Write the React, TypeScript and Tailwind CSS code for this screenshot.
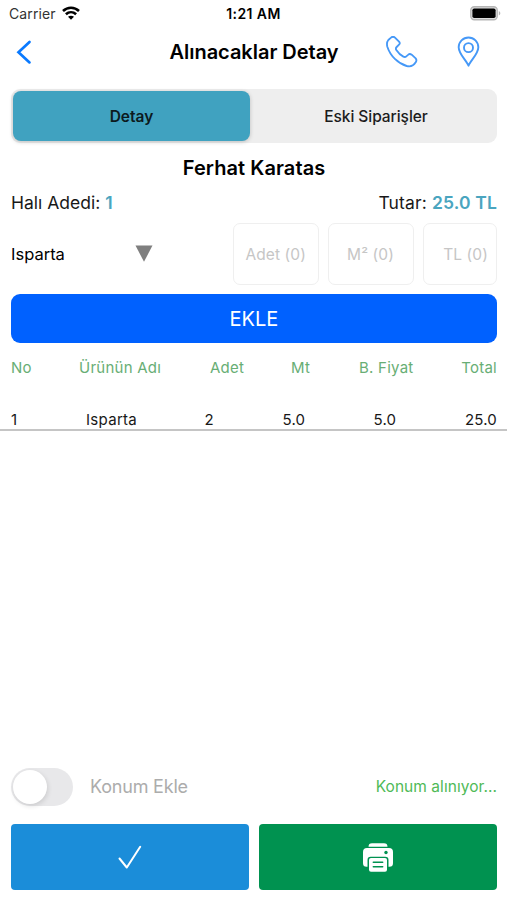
import { useState } from 'react';

interface OrderLine {
  no: number;
  name: string;
  quantity: number;
  meters: string;
  unitPrice: string;
  total: string;
}

const ORDER_LINES: OrderLine[] = [
  { no: 1, name: 'Isparta', quantity: 2, meters: '5.0', unitPrice: '5.0', total: '25.0' },
];

function WifiIcon() {
  return (
    <svg width="18" height="14" viewBox="0 0 18 14" fill="none" stroke="#000" strokeWidth="2.6" className="-mt-[2px]">
      <path d="M1 5C5.6.7 12.4.7 17 5" />
      <path d="M3.9 8.3c3-2.8 7.2-2.8 10.2 0" />
      <path d="M9 13.8 6 10.8c1.7-1.5 4.3-1.5 6 0z" fill="#000" stroke="none" />
    </svg>
  );
}

function BatteryIcon() {
  return (
    <svg width="31" height="15" viewBox="0 0 31 15">
      <rect x=".75" y=".75" width="26.5" height="13" rx="3.5" fill="#dedede" stroke="#b5b5b5" strokeWidth="1.3" />
      <rect x="2.4" y="2.4" width="23.2" height="9.7" rx="1.8" />
      <path d="M28.8 5c2 .8 2 3.7 0 4.5z" fill="#b5b5b5" />
    </svg>
  );
}

function PhoneIcon() {
  return (
    <svg width="32" height="32" viewBox="0 0 96 96" fill="none" stroke="#4598f7" strokeWidth="5.5" strokeLinejoin="round">
      <path d="M7 12 15 5C19 1 23 1 27 5L39 17C42 20 42 23 39 26L32 33C29 36 29 39 31 42 37 51 44 58 52 62 56 64 58 64 61 61L67 56C70 53 73 53 77 56L89 67C92 71 92 75 89 79 83 89 73 93 62 90 36 82 13 60 4 32 2 24 2 18 7 12Z" />
    </svg>
  );
}

function PinIcon() {
  return (
    <svg width="23" height="32" viewBox="0 0 69 96" fill="none" stroke="#4598f7" strokeWidth="5.7" strokeLinejoin="round">
      <path d="M34.5 89C29 74 5 54 5 33.500a29.500 29 0 0 1 59 0C64 54 40 74 34.500 89Z" />
      <circle cx="34.5" cy="35" r="13.500" />
    </svg>
  );
}

function StatusBar() {
  return (
    <div className="grid h-[27px] grid-cols-3 items-center pl-[9px] pr-[6px]">
      <div className="flex items-center gap-[6px] text-[14px] tracking-[0.1px] text-[#333]">
        Carrier
        <WifiIcon />
      </div>
      <span className="-ml-[3px] text-center text-[14px] font-semibold tracking-[0.4px]">1:21 AM</span>
      <div className="flex justify-end">
        <BatteryIcon />
      </div>
    </div>
  );
}

function NavBar() {
  return (
    <header className="grid h-[50px] grid-cols-[1fr_auto_1fr] items-center pl-[16px] pr-[27px]">
      <button type="button" aria-label="Geri">
        <svg width="16" height="26" viewBox="0 0 16 26" fill="none" stroke="#0a7aff" strokeWidth="2.7" strokeLinecap="round">
          <path d="M13.5 3 2.5 13.2 13.5 23.4" />
        </svg>
      </button>
      <h1 className="ml-[12px] text-[20px] font-semibold tracking-[-0.03px]">Alınacaklar Detay</h1>
      <div className="flex items-center justify-end gap-[39px]">
        <PhoneIcon />
        <PinIcon />
      </div>
    </header>
  );
}

function Tabs() {
  const [active, setActive] = useState(0);
  const tabs = ['Detay', 'Eski Siparişler'];

  return (
    <div className="ml-[11px] mr-[10px] mt-[12px] grid h-[54px] grid-cols-2 rounded-[9px] bg-[#eeeeee] py-[2px] pl-[2px]">
      {tabs.map((tab, i) => (
        <button
          key={tab}
          type="button"
          onClick={() => setActive(i)}
          className={
            i === active
              ? 'mr-[5px] rounded-[8px] bg-[#40a2c0] pt-[2px] text-[15.5px] font-semibold text-[#0c1a1e] shadow-[0_1px_4px_rgba(0,0,0,0.2)]'
              : 'rounded-[8px] pt-[2px] text-[15.5px] font-medium tracking-[-0.05px] text-[#1c1c1c]'
          }
        >
          {tab}
        </button>
      ))}
    </div>
  );
}

function NewLineForm() {
  const field =
    'h-[62px] rounded-[7px] border border-[#efefef] text-right text-[15.5px] tracking-[0.1px] placeholder:text-[#c6c6c6] focus:outline-none';

  return (
    <div className="mt-[8px] flex h-[62px] items-center">
      <button type="button" className="flex w-[142px] items-center justify-between text-[16.5px]">
        Isparta
        <svg width="18" height="17" viewBox="0 0 18 17" fill="#7f7f7f" className="-mt-[2px]">
          <path d="M.5.5h17L9 16.8z" />
        </svg>
      </button>
      <div className="ml-auto flex gap-[9px]">
        <input placeholder="Adet (0)" className={`${field} w-[86px] pr-[12px]`} />
        <input placeholder="M² (0)" className={`${field} w-[86px] pr-[19px]`} />
        <input placeholder="TL (0)" className={`${field} w-[74px] pr-[8px]`} />
      </div>
    </div>
  );
}

function OrderTable() {
  return (
    <section>
      <div className="flex h-[50px] pl-[11px] pr-[10px] text-[15px] leading-[50px] tracking-[0.25px] text-[#68ae75]">
        <span className="w-[68px]">No</span>
        <span className="w-[131px]">Ürünün Adı</span>
        <span className="w-[81px]">Adet</span>
        <span className="w-[68px]">Mt</span>
        <span>B. Fiyat</span>
        <span className="ml-auto">Total</span>
      </div>
      {ORDER_LINES.map((line) => (
        <div
          key={line.no}
          className="flex h-[38px] items-end border-b-2 border-[#c5c5c5] pl-[11px] pr-[10px] text-[15px] leading-[18px] text-[#181818]"
        >
          <span className="w-[75px]">{line.no}</span>
          <span className="w-[118.5px] tracking-[0.3px]">{line.name}</span>
          <span className="w-[78px]">{line.quantity}</span>
          <span className="w-[91px] tracking-[0.2px]">{line.meters}</span>
          <span className="tracking-[0.2px]">{line.unitPrice}</span>
          <span className="ml-auto tracking-[0.2px]">{line.total}</span>
        </div>
      ))}
    </section>
  );
}

function Footer() {
  const [location, setLocation] = useState(false);

  return (
    <footer className="mt-auto pb-[10px] pl-[11px] pr-[10px]">
      <div className="mb-[18px] flex h-[38px] items-center">
        <button
          type="button"
          role="switch"
          aria-checked={location}
          onClick={() => setLocation(!location)}
          className="flex h-[38px] w-[62px] items-center rounded-full bg-[#e8e8ea] p-[2px]"
        >
          <span
            className={`h-[34px] w-[34px] rounded-full bg-white shadow-[1px_2px_5px_rgba(0,0,0,0.12)] ${location ? 'ml-auto' : ''}`}
          />
        </button>
        <span className="-mt-px ml-[17px] text-[18px] tracking-[-0.2px] text-[#acacac]">Konum Ekle</span>
        <span className="ml-auto text-[15.5px] tracking-[0.05px] text-[#4fba57]">Konum alınıyor...</span>
      </div>
      <div className="grid grid-cols-2 gap-[10px]">
        <button type="button" aria-label="Onayla" className="flex h-[66px] items-center justify-center rounded-[4px] bg-[#1b8dd9]">
          <svg width="24" height="24" viewBox="0 0 24 24" fill="none" stroke="#fff" strokeWidth="2" strokeLinecap="round" strokeLinejoin="round">
            <path d="m1.5 13.5 7.3 9L22.2 1.8" />
          </svg>
        </button>
        <button type="button" aria-label="Yazdır" className="flex h-[66px] items-center justify-center rounded-[4px] bg-[#009250]">
          <svg width="30" height="29" viewBox="0 0 30 29" fill="#fff" className="-ml-px">
            <path d="M5.5 3.7C5.5 1.4 6.7.3 9 .3h12c2.3 0 3.5 1.1 3.5 3.4z" />
            <path d="M4 5h22a4 4 0 0 1 4 4v11.2a3.6 3.6 0 0 1-3.6 3.6h-.9V17a3.2 3.2 0 0 0-3.2-3.2H7.7A3.2 3.2 0 0 0 4.5 17v6.8h-.9A3.6 3.6 0 0 1 0 20.2V9a4 4 0 0 1 4-4z" />
            <circle cx="23" cy="9.5" r="1.7" fill="#009250" />
            <rect x="6" y="15" width="18" height="13.7" rx="2" />
            <path d="M10.3 19.2h9.4M10.3 23.7h9.4" stroke="#009250" strokeWidth="1.5" strokeLinecap="round" />
          </svg>
        </button>
      </div>
    </footer>
  );
}

export default function App() {
  return (
    <main className="flex h-[900px] w-[507px] flex-col bg-white font-['Inter',sans-serif] text-black">
      <StatusBar />
      <NavBar />
      <Tabs />
      <div className="pl-[11px] pr-[10px]">
        <h2 className="mt-[10px] text-center text-[20px] font-semibold leading-[30px] tracking-[0.08px]">
          Ferhat Karatas
        </h2>
        <div className="mt-[7px] flex justify-between text-[17.5px] leading-[25px] text-[#181818]">
          <span>
            Halı Adedi: <b className="font-semibold text-[#4aa5bf]">1</b>
          </span>
          <span className="tracking-[0.15px]">
            Tutar: <b className="font-semibold text-[#4aa5bf]">25.0 TL</b>
          </span>
        </div>
        <NewLineForm />
        <button type="button" className="mt-[9px] h-[49px] w-full rounded-[9px] bg-[#0061ff] text-[20px] text-white">
          EKLE
        </button>
      </div>
      <OrderTable />
      <Footer />
    </main>
  );
}
